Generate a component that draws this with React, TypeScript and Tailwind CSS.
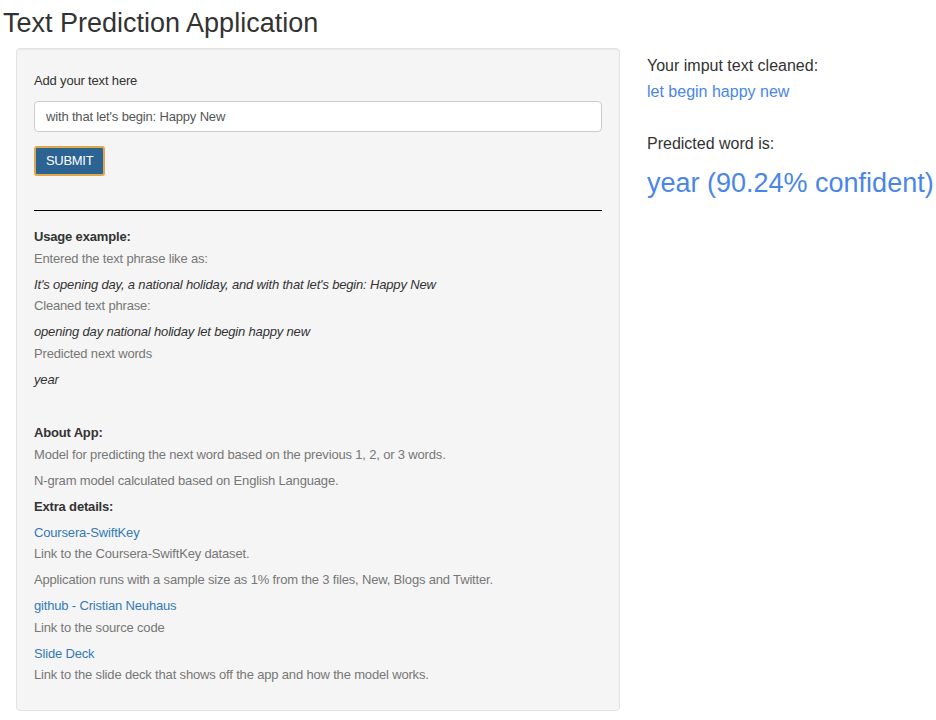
import React, { useState } from 'react';

const font = { fontFamily: '"Liberation Sans", Arial, sans-serif' };

function Gray({ children, className = '' }: { children: React.ReactNode; className?: string }) {
  return <div className={`text-[13px] leading-[18px] tracking-[-0.17px] text-[#777] ${className}`}>{children}</div>;
}

function Em({ children, className = '' }: { children: React.ReactNode; className?: string }) {
  return <div className={`text-[13px] leading-[18px] tracking-[-0.17px] italic text-[#333] ${className}`}>{children}</div>;
}

function Head({ children, className = '' }: { children: React.ReactNode; className?: string }) {
  return <div className={`text-[13px] leading-[18px] tracking-[-0.17px] font-bold text-[#333] ${className}`}>{children}</div>;
}

function Link({ children, className = '' }: { children: React.ReactNode; className?: string }) {
  return <a href="#" className={`block text-[13px] leading-[18px] tracking-[-0.17px] text-[#337ab7] ${className}`}>{children}</a>;
}

export default function App() {
  const [text, setText] = useState("with that let's begin: Happy New");
  return (
    <div className="w-[936px] h-[720px] bg-white overflow-hidden text-[#333]" style={font}>
      <h1 className="pl-[3px] pt-[7px] text-[27px] leading-[32px] font-normal">Text Prediction Application</h1>
      <div className="flex mt-[9px]">
        <div className="ml-4 w-[604px] h-[663px] bg-[#f5f5f5] border border-[#e3e3e3] rounded shadow-[inset_0_1px_1px_rgba(0,0,0,0.05)] px-[17px] pt-[23px]">
          <label className="block text-[13px] leading-[18px] tracking-[-0.17px]">Add your text here</label>
          <input
            value={text}
            onChange={e => setText(e.target.value)}
            className="mt-[11px] block w-full h-[31px] bg-white border border-[#ccc] rounded px-[11px] text-[13px] tracking-[-0.17px] text-[#555] outline-none"
          />
          <button className="mt-[14px] h-[30px] px-[10px] bg-[#2b6392] border-2 border-[#e0a84a] rounded-[3px] text-white text-[13px] tracking-[-0.3px]">SUBMIT</button>
          <hr className="mt-[34px] border-0 border-t border-black" />
          <Head className="mt-[17px]">Usage example:</Head>
          <Gray className="mt-[4px]">Entered the text phrase like as:</Gray>
          <Em className="mt-[8px]">It's opening day, a national holiday, and with that let's begin: Happy New</Em>
          <Gray className="mt-[3px]">Cleaned text phrase:</Gray>
          <Em className="mt-[8px]">opening day national holiday let begin happy new</Em>
          <Gray className="mt-[4px]">Predicted next words</Gray>
          <Em className="mt-[8px]">year</Em>
          <Head className="mt-[35px]">About App:</Head>
          <Gray className="mt-[4px]">Model for predicting the next word based on the previous 1, 2, or 3 words.</Gray>
          <Gray className="mt-[8px]">N-gram model calculated based on English Language.</Gray>
          <Head className="mt-[8px]">Extra details:</Head>
          <Link className="mt-[8px]">Coursera-SwiftKey</Link>
          <Gray className="mt-[3px]">Link to the Coursera-SwiftKey dataset.</Gray>
          <Gray className="mt-[8px]">Application runs with a sample size as 1% from the 3 files, New, Blogs and Twitter.</Gray>
          <Link className="mt-[8px]">github - Cristian Neuhaus</Link>
          <Gray className="mt-[4px]">Link to the source code</Gray>
          <Link className="mt-[8px]">Slide Deck</Link>
          <Gray className="mt-[3px]">Link to the slide deck that shows off the app and how the model works.</Gray>
        </div>
        <div className="ml-[27px] pt-[7px]">
          <div className="text-[16px] leading-[22px]">Your imput text cleaned:</div>
          <div className="mt-[4px] text-[16px] leading-[22px] text-[#4a86e8]">let begin happy new</div>
          <div className="mt-[30px] text-[16px] leading-[22px]">Predicted word is:</div>
          <div className="mt-[12px] text-[27px] leading-[32px] text-[#4a86e8] whitespace-nowrap">year (90.24% confident)</div>
        </div>
      </div>
    </div>
  );
}
